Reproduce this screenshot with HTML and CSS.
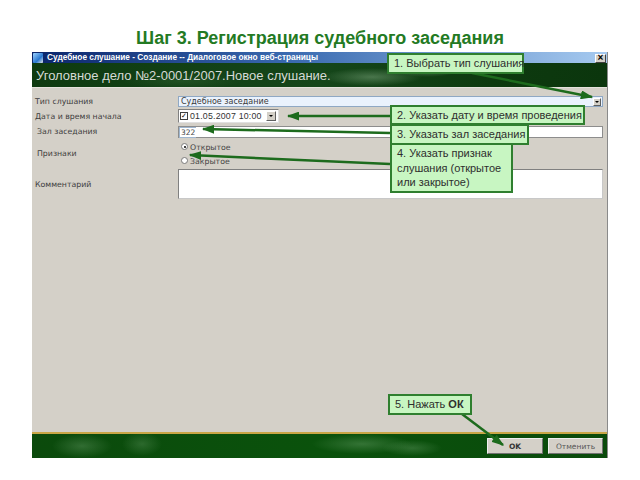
FILE: index.html
```html
<!DOCTYPE html>
<html lang="ru">
<head>
<meta charset="utf-8">
<title>Шаг 3. Регистрация судебного заседания</title>
<link rel="stylesheet" href="styles.css">
</head>
<body>
<h1 class="title">Шаг 3. Регистрация судебного заседания</h1>
<div class="window">
  <div class="titlebar">
    <span class="ticon"></span>
    <span class="ttext">Судебное слушание - Создание -- Диалоговое окно веб-страницы</span>
    <span class="close">×</span>
  </div>
  <div class="header">Уголовное дело №2-0001/2007.Новое слушание.</div>
  <div class="form">
    <div class="label">Тип слушания</div>
    <div class="select"><span class="stext">Судебное заседание</span><span class="ddbtn"></span></div>

    <div class="label">Дата и время начала</div>
    <div class="datebox"><span class="chk">✓</span><span class="dtext">01.05.2007 10:00</span><span class="ddbtn big"></span></div>

    <div class="label indent">Зал заседания</div>
    <div class="input"><span class="sel">322</span></div>

    <div class="label indent">Признаки</div>
    <div class="radios">
      <div class="radio"><span class="rdot on"></span>Открытое</div>
      <div class="radio"><span class="rdot"></span>Закрытое</div>
    </div>

    <div class="label">Комментарий</div>
    <div class="textarea"></div>
  </div>
  <div class="footer">
    <span class="btn ok">OK</span>
    <span class="btn">Отменить</span>
  </div>
</div>

<svg class="arrows" width="640" height="480" viewBox="0 0 640 480">
  <defs>
    <marker id="ah" markerWidth="5" markerHeight="3.6" refX="4.5" refY="1.8" orient="auto" markerUnits="strokeWidth">
      <path d="M0,0 L5,1.8 L0,3.6 z" fill="#1d6b1d"/>
    </marker>
  </defs>
  <g stroke="#1d6b1d" stroke-width="2.5" fill="none" marker-end="url(#ah)">
    <line x1="472" y1="73" x2="592" y2="97"/>
    <line x1="390" y1="116" x2="288" y2="116"/>
    <line x1="390" y1="133" x2="203" y2="129"/>
    <line x1="390" y1="164" x2="190" y2="155"/>
    <line x1="462" y1="414" x2="503" y2="445"/>
  </g>
</svg>

<div class="callout c1">1. Выбрать тип слушания</div>
<div class="callout c2">2. Указать дату и время проведения</div>
<div class="callout c3">3. Указать зал заседания</div>
<div class="callout c4">4. Указать признак<br>слушания (открытое<br>или закрытое)</div>
<div class="callout c5">5. Нажать <b>ОК</b></div>
</body>
</html>
```

FILE: styles.css
```css
* { box-sizing: border-box; }

body {
  margin: 0;
  width: 640px;
  height: 480px;
  position: relative;
  overflow: hidden;
  background: #ffffff;
  font-family: "Liberation Sans", Arial, sans-serif;
}

.title {
  margin: 0;
  height: 52px;
  padding-top: 27px;
  font-size: 18px;
  line-height: 22px;
  font-weight: bold;
  text-align: center;
  color: #237a23;
}

.window {
  margin-left: 32px;
  width: 576px;
  height: 406px;
  display: flex;
  flex-direction: column;
  background: #d4d0c8;
  border-right: 1px solid #8a8a8a;
}

.titlebar {
  height: 11px;
  display: flex;
  align-items: center;
  gap: 4px;
  padding: 0 1px 0 1px;
  background: linear-gradient(to right, #0a246a, #3a6ab0 45%, #a6caf0);
}

.ticon {
  width: 10px;
  height: 10px;
  background: linear-gradient(135deg, #9fd4ff, #2a78d0 60%, #e8e8e8);
  border-radius: 1px;
}

.ttext {
  flex: 1;
  color: #ffffff;
  font-size: 8.3px;
  font-weight: bold;
  white-space: nowrap;
  line-height: 11px;
}

.close {
  width: 11px;
  height: 9px;
  margin-top: 2px;
  background: #d4d0c8;
  border: 1px solid;
  border-color: #ffffff #404040 #404040 #ffffff;
  color: #000;
  font-size: 10px;
  line-height: 6px;
  text-align: center;
  font-weight: bold;
}

.header {
  height: 24px;
  padding-left: 4px;
  line-height: 25px;
  font-size: 13px;
  color: #d6dad6;
  white-space: nowrap;
  background:
    radial-gradient(ellipse 50px 9px at 340px 14px, rgba(140,180,140,0.45), rgba(140,180,140,0) 100%),
    radial-gradient(ellipse 30px 6px at 395px 8px, rgba(160,200,160,0.35), rgba(160,200,160,0) 100%),
    radial-gradient(ellipse 60px 8px at 150px 18px, rgba(60,110,60,0.35), rgba(60,110,60,0) 100%),
    linear-gradient(to right, #0e3a10, #15461a 50%, #0d3a0f 80%, #0b360d);
}

.form {
  flex: 1;
  display: grid;
  grid-template-columns: 143px 1fr;
  align-content: start;
  row-gap: 2px;
  padding: 8px 4px 0 3px;
  font-family: "DejaVu Sans", Verdana, sans-serif;
  font-size: 7.8px;
  color: #3c3c3c;
  border-top: 1px solid #e4e2dc;
}

.label {
  display: flex;
  align-items: center;
  white-space: nowrap;
}

.indent { padding-left: 2px; }

.select {
  height: 11px;
  display: flex;
  align-items: center;
  background: #eaf2fd;
  border: 1px solid #8fa8c4;
}

.stext {
  flex: 1;
  padding-left: 2px;
  font-size: 8px;
  color: #3a3a3a;
  line-height: 9px;
}

.ddbtn {
  width: 8px;
  height: 8px;
  margin-right: 1px;
  background: #d4d0c8;
  border: 1px solid;
  border-color: #ffffff #606060 #606060 #ffffff;
  position: relative;
}

.ddbtn::after {
  content: "";
  position: absolute;
  left: 1px;
  top: 2px;
  border-left: 2px solid transparent;
  border-right: 2px solid transparent;
  border-top: 2px solid #000;
}

.ddbtn.big {
  width: 10px;
  height: 10px;
}

.ddbtn.big::after {
  left: 2px;
  top: 3px;
}

.datebox {
  width: 101px;
  height: 14px;
  display: flex;
  align-items: center;
  gap: 2px;
  padding: 0 1px;
  background: #ffffff;
  border: 1px solid;
  border-color: #808080 #e0e0e0 #e0e0e0 #808080;
}

.chk {
  width: 8px;
  height: 8px;
  border: 1px solid #404040;
  font-size: 7px;
  line-height: 6px;
  text-align: center;
  color: #000;
}

.dtext {
  flex: 1;
  font-family: "Liberation Sans", Arial, sans-serif;
  font-size: 8.8px;
  color: #333;
  letter-spacing: 0.2px;
}

.input {
  height: 12px;
  margin-top: 1px;
  display: flex;
  align-items: center;
  background: #ffffff;
  border: 1px solid #8d8d8d;
  padding-left: 0;
}

.sel {
  font-size: 7.5px;
  line-height: 9px;
  border: 1px solid #9fb6cf;
  border-right: none;
  padding: 0 1px;
  color: #444;
}

.radios {
  height: 27px;
  display: flex;
  flex-direction: column;
  justify-content: space-between;
  padding: 3px 0 0 3px;
}

.radio {
  display: flex;
  align-items: center;
  gap: 2px;
  line-height: 10px;
  color: #444;
}

.rdot {
  width: 7px;
  height: 7px;
  border-radius: 50%;
  background: #ffffff;
  border: 1px solid #7a7a7a;
  position: relative;
  margin-top: -3px;
}

.rdot.on::after {
  content: "";
  position: absolute;
  left: 1.5px;
  top: 1.5px;
  width: 2px;
  height: 2px;
  border-radius: 50%;
  background: #000;
}

.textarea {
  height: 30px;
  background: #ffffff;
  border: 1px solid;
  border-color: #808080 #c8c8c8 #c8c8c8 #808080;
}

.footer {
  height: 26px;
  display: flex;
  justify-content: flex-end;
  align-items: center;
  gap: 5px;
  padding-right: 4px;
  border-top: 2px solid #c9a647;
  background:
    radial-gradient(ellipse 30px 12px at 50px 12px, rgba(120,170,120,0.35), rgba(120,170,120,0) 100%),
    radial-gradient(ellipse 20px 12px at 110px 10px, rgba(120,170,120,0.3), rgba(120,170,120,0) 100%),
    radial-gradient(ellipse 50px 10px at 330px 10px, rgba(130,180,130,0.35), rgba(130,180,130,0) 100%),
    radial-gradient(ellipse 30px 8px at 380px 14px, rgba(130,180,130,0.3), rgba(130,180,130,0) 100%),
    linear-gradient(to right, #0b4a0c, #0a520c 50%, #0a4a0b);
}

.btn {
  height: 16px;
  width: 55px;
  display: flex;
  align-items: center;
  justify-content: center;
  background: #d4d0c8;
  border: 1px solid;
  border-color: #f0f0f0 #707070 #707070 #f0f0f0;
  font-family: "DejaVu Sans", Verdana, sans-serif;
  font-size: 7.5px;
  color: #555;
}

.btn.ok {
  width: 56px;
  font-weight: bold;
  color: #333;
}

.arrows {
  position: absolute;
  left: 0;
  top: 0;
  pointer-events: none;
}

.callout {
  position: absolute;
  background: #c8f6c2;
  border: 2px solid #2f7f2f;
  color: #2e2e2e;
  font-size: 11px;
  line-height: 17px;
  padding: 0 5px;
  white-space: nowrap;
}

.c1 { left: 387px; top: 53px; width: 137px; height: 21px; }
.c2 { left: 390px; top: 105px; width: 195px; height: 20px; line-height: 16px; }
.c3 { left: 390px; top: 124px; width: 139px; height: 21px; }
.c4 { left: 390px; top: 143px; width: 123px; height: 50px; line-height: 14.5px; padding-top: 1px; }
.c5 { left: 388px; top: 394px; width: 84px; height: 21px; }
```
